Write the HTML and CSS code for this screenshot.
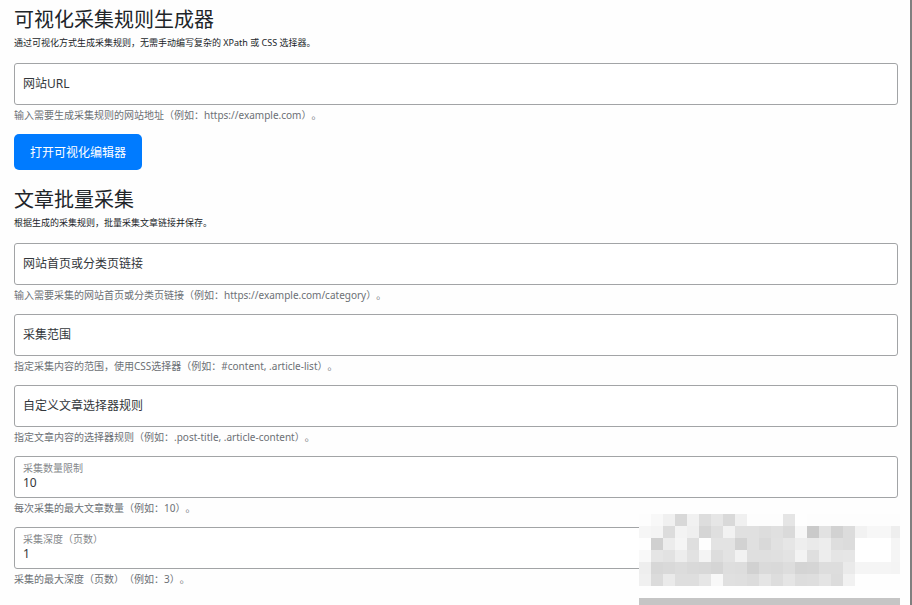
FILE: index.html
```html
<!DOCTYPE html>
<html lang="zh-CN">
<head>
<meta charset="utf-8">
<meta name="viewport" content="width=device-width, initial-scale=1">
<title>可视化采集规则生成器</title>
<link rel="stylesheet" href="styles.css">
</head>
<body>
<main class="page">
  <section class="section">
    <h1 class="title">可视化采集规则生成器</h1>
    <p class="lead">通过可视化方式生成采集规则，无需手动编写复杂的 XPath 或 CSS 选择器。</p>
    <div class="group">
      <div class="field">
        <input id="site-url" type="url" placeholder=" " aria-describedby="site-url-help">
        <label for="site-url">网站URL</label>
      </div>
      <p class="help" id="site-url-help">输入需要生成采集规则的网站地址（例如：https://example.com）。</p>
    </div>
    <button class="button" type="button">打开可视化编辑器</button>
  </section>

  <section class="section">
    <h2 class="title">文章批量采集</h2>
    <p class="lead">根据生成的采集规则，批量采集文章链接并保存。</p>
    <div class="group">
      <div class="field">
        <input id="list-url" type="url" placeholder=" " aria-describedby="list-url-help">
        <label for="list-url">网站首页或分类页链接</label>
      </div>
      <p class="help" id="list-url-help">输入需要采集的网站首页或分类页链接（例如：https://example.com/category）。</p>
    </div>
    <div class="group">
      <div class="field">
        <input id="scope" type="text" placeholder=" " aria-describedby="scope-help">
        <label for="scope">采集范围</label>
      </div>
      <p class="help" id="scope-help">指定采集内容的范围，使用CSS选择器（例如：#content, .article-list）。</p>
    </div>
    <div class="group">
      <div class="field">
        <input id="rules" type="text" placeholder=" " aria-describedby="rules-help">
        <label for="rules">自定义文章选择器规则</label>
      </div>
      <p class="help" id="rules-help">指定文章内容的选择器规则（例如：.post-title, .article-content）。</p>
    </div>
    <div class="group">
      <div class="field">
        <input id="limit" type="number" value="10" placeholder=" " aria-describedby="limit-help">
        <label for="limit">采集数量限制</label>
      </div>
      <p class="help" id="limit-help">每次采集的最大文章数量（例如：10）。</p>
    </div>
    <div class="group">
      <div class="field">
        <input id="depth" type="number" value="1" placeholder=" " aria-describedby="depth-help">
        <label for="depth">采集深度（页数）</label>
        <svg class="mosaic" id="mosaic" viewBox="0 0 261 91" aria-hidden="true"></svg>
      </div>
      <p class="help" id="depth-help">采集的最大深度（页数）（例如：3）。</p>
    </div>
  </section>
</main>
<script src="mosaic.js"></script>
</body>
</html>
```
FILE: styles.css
```css
* {
  box-sizing: border-box;
}

body {
  margin: 0;
  background: #fefefe;
  color: #212529;
  font-family: "Noto Sans", "Noto Sans CJK SC", sans-serif;
  font-size: 12px;
  text-spacing-trim: space-all;
}

.page {
  min-height: 100vh;
  padding: 8px 12px 0 14px;
  border-right: 2px solid #808080;
}

.section + .section {
  margin-top: 18px;
}

.title {
  margin: 0 0 4px;
  font-size: 20px;
  font-weight: 400;
  line-height: 24px;
}

.lead {
  margin: 0 0 13px;
  font-size: 9px;
  line-height: 14px;
}

.group {
  margin-bottom: 9px;
}

.group:last-child {
  margin-bottom: 0;
}

.field {
  position: relative;
}

.field input {
  display: block;
  width: 100%;
  height: 42px;
  padding: 12px 8px 2px;
  border: 1px solid #a2a4a6;
  border-radius: 3px;
  background: #fff;
  color: #33373b;
  font: inherit;
  appearance: textfield;
}

.field input::-webkit-inner-spin-button {
  appearance: none;
}

.field label {
  position: absolute;
  top: 4px;
  left: 9px;
  color: #85888b;
  font-size: 10px;
  line-height: 16px;
  pointer-events: none;
}

.field input:placeholder-shown + label {
  top: 0;
  color: #33373b;
  font-size: 12px;
  line-height: 42px;
}

.help {
  margin: 0;
  color: #6c7075;
  font-size: 10px;
  line-height: 20px;
}

.button {
  display: block;
  height: 36px;
  padding: 0 16px;
  border: 0;
  border-radius: 5px;
  background: #007bff;
  color: #fff;
  font: inherit;
}

.mosaic {
  position: absolute;
  top: -13px;
  right: -2px;
  width: 261px;
  height: 91px;
}
```
FILE: mosaic.js
```js
// Grey level of each tile, one row of the mosaic per line.
const rows = [
  "fd f8 f0 d8 f1 dd e6 d9 f0 fd fd fd e5 fe fd fd fd fd fd fd fd fd",
  "f6 f4 dc f3 ef d5 df f2 e0 e0 dd e0 da f7 ca e2 d2 dc f2 f7 f7 ee",
  "fe d0 ec f5 df fe e3 e3 d2 e0 d9 e1 e6 ee ea ed de dc ff ff ff f5",
  "f9 e5 e2 ed e2 f4 dd e3 f2 df df e0 e3 f3 df ed e5 e6 ff ff ff f5",
  "ee d7 d9 dc d9 d8 d5 de dd d1 da d9 dd d4 d5 dd dd ea f5 f5 f5 f4",
  "f0 db ea de de e6 f8 e0 df dc e5 dd e5 dd de e4 dc f1 fe fe fe fe"
];
const svg = document.getElementById("mosaic");

function tile(x, y, width, height, level) {
  const rect = document.createElementNS("http://www.w3.org/2000/svg", "rect");
  rect.setAttribute("x", x);
  rect.setAttribute("y", y);
  rect.setAttribute("width", width);
  rect.setAttribute("height", height);
  rect.setAttribute("fill", "#" + level + level + level);
  svg.append(rect);
}

rows.forEach((row, r) => {
  row.split(" ").forEach((level, c) => tile(c * 12, r * 12, 12, 12, level));
});
tile(0, 84, 261, 7, "c5");
```
